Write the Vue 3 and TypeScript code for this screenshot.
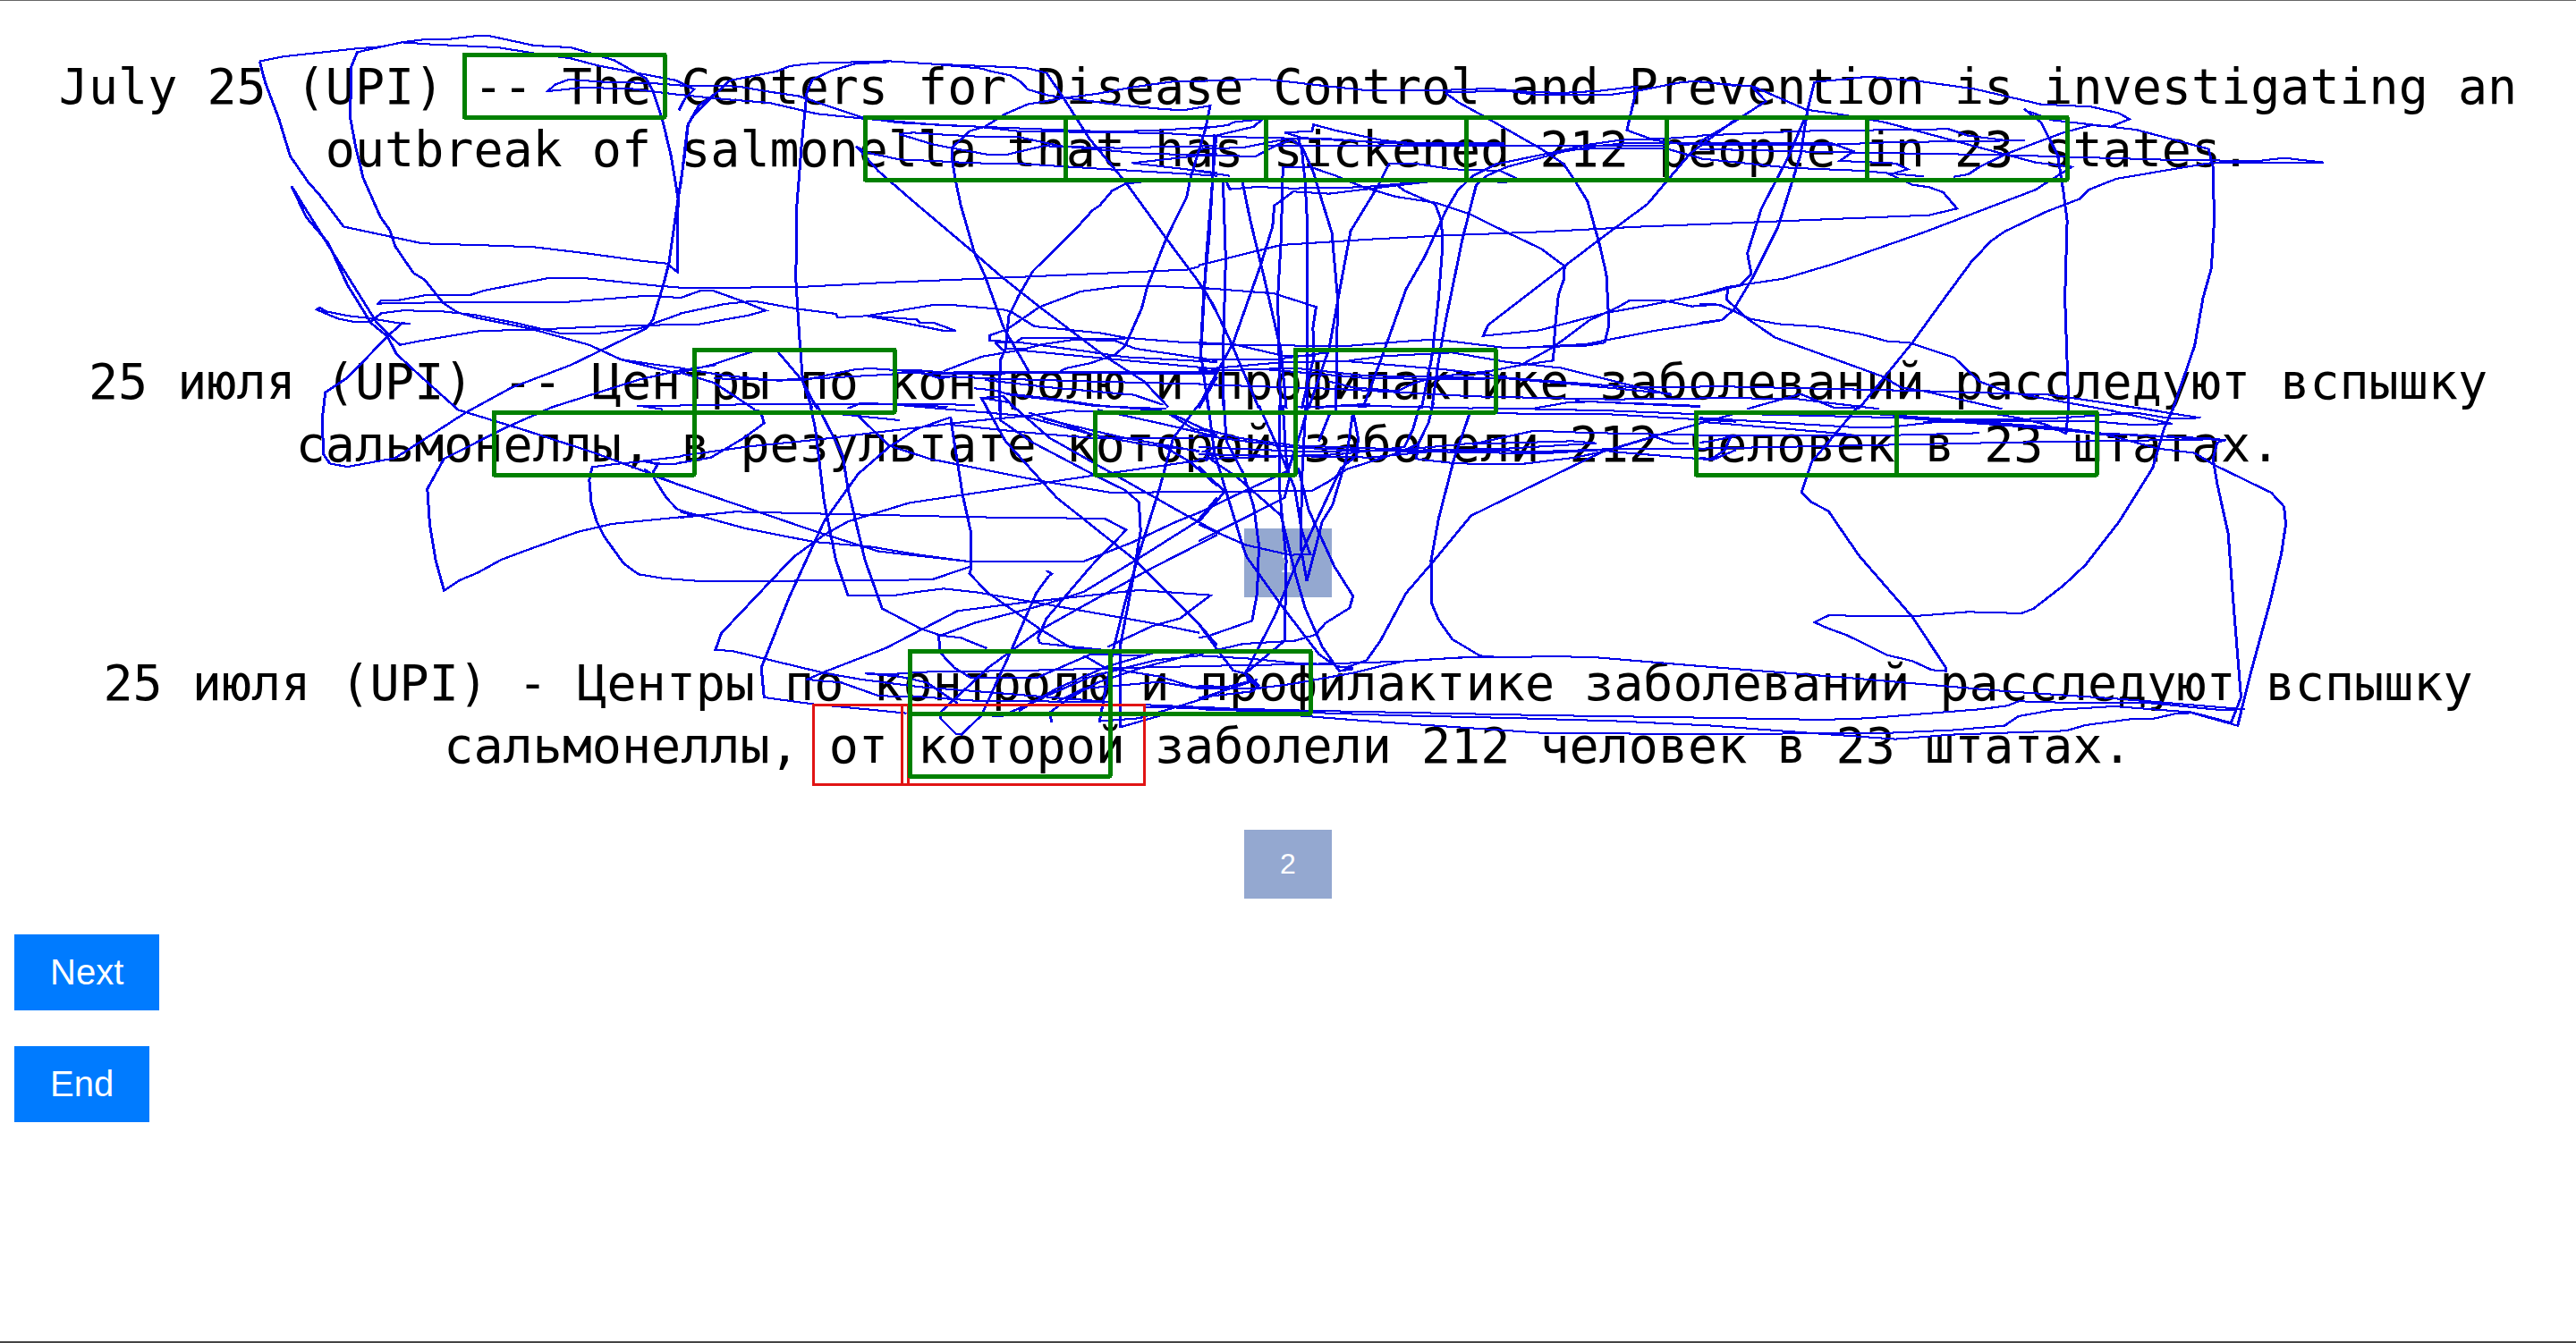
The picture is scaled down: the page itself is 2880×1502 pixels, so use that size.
<script setup lang="ts">
interface Tile {
  x: number
  y: number
  sx: number
  sy: number
  lines: string[]
}

interface Box {
  x: number
  y: number
  w: number
  h: number
}

const source: string =
  'July 25 (UPI) -- The Centers for Disease Control and Prevention is investigating an outbreak of salmonella that has sickened 212 people in 23 states.'
const optionOne: string =
  '25 июля (UPI) -- Центры по контролю и профилактике заболеваний расследуют вспышку сальмонеллы, в результате которой заболели 212 человек в 23 штатах.'
const optionTwo: string =
  '25 июля (UPI) - Центры по контролю и профилактике заболеваний расследуют вспышку сальмонеллы, от которой заболели 212 человек в 23 штатах.'

// Fixation cells: each one is 224 x 70
const cell = (x: number, y: number): Box => ({ x, y, w: 224, h: 70 })
const fixations: Box[] = [
  cell(519, 61),
  ...[0, 1, 2, 3, 4, 5].map((i) => cell(967 + i * 224, 131)),
  cell(776, 391),
  cell(1448, 391),
  cell(552, 461),
  cell(1224, 461),
  cell(1896, 461),
  cell(2120, 461),
  cell(1017, 728),
  cell(1241, 728),
  cell(1017, 798),
]

const differences: Box[] = [
  { x: 909, y: 788, w: 106, h: 89 },
  { x: 1008, y: 788, w: 271, h: 89 },
]

// Gaze trace, recorded per screen tile in the tile's own units
const tiles: Tile[] = [
  {
    x: 0, y: 0, sx: 0.5102, sy: 0.4082,
    lines: [
      '568,168 620,155 780,133 835,128 880,116 935,107 985,107 1045,98 1070,98 1170,125 1250,130 1345,165 1415,215 1430,250 1450,325 1470,430 1485,545 1483,745 1460,722 1400,714 1290,695 1170,677 1060,672 925,667 752,621 700,535 675,500 635,428 610,325 580,225 568,168',
      '880,116 950,122 1090,130 1190,150 1250,160 1310,180 1480,220 1520,245 1500,270 1487,302',
      '835,128 782,143 768,185 767,325 778,400 795,488 833,595 853,630 865,675 905,748 930,767 970,830 1000,855 1040,870 1160,900 1290,945 1360,985 1440,1010 1490,1025',
      '1490,260 1380,243 1275,240 1200,250 1215,232 1245,218 1340,226 1420,227 1490,234',
      '1568,255 1530,290 1507,340 1500,420 1485,545 1465,720 1455,770 1430,875 1415,900 1250,1000 1120,1062 1020,1130 865,1255 760,1279 722,1270 708,1245 705,1150 712,1075 760,1035 848,922 880,885 897,887',
      '638,510 670,595 718,665 760,780 812,885 848,922 868,970 920,1030 1003,1123 1140,1175 1300,1240 1430,1300 1490,1330',
      '638,510 660,555 740,715 825,885 875,945 915,935 1050,907 1190,902 1310,895 1490,889',
      '812,880 835,858 880,851 960,852 1040,863 1130,885 1225,913 1305,914 1400,900 1490,860',
      '812,883 780,883 740,873 715,860 693,848 700,843 712,853 760,865 810,872 880,887 897,887',
      '825,835 835,822 875,822 935,808 1030,808 1060,796 1200,762 1280,762 1430,782 1490,788',
      '825,832 940,829 1235,828 1420,810 1490,816',
      '1360,985 1440,1000 1490,1008',
      '1568,1000 1480,1017 1400,1040 1210,1115 1110,1170 975,1255',
      '1450,1121 1395,1111 1490,1111',
    ],
  },
  {
    x: 760, y: 0, sx: 0.3827, sy: 0.3333,
    lines: [
      '0,632 22,420 40,385 75,345 145,270 280,240 320,222 390,212 610,205 740,215 890,222 1010,228 1070,245 1115,320 1195,465 1300,610 1420,800 1530,970 1568,1050',
      '0,287 120,287 180,292 260,308 345,322 430,355 535,395 640,412 780,420 890,426 1130,437 1260,442 1400,437 1568,425',
      '0,318 130,333 260,345 400,382 535,398 640,408 760,420 870,425 1000,442 1240,443 1430,448 1568,458',
      '610,208 510,214 440,238 385,268 370,310 355,480 340,700 338,940 347,1110 358,1280 385,1370',
      '740,215 880,230 910,240 965,253 995,275 1015,300 1075,320 1125,328 1215,315 1325,292 1450,272 1516,273',
      '1125,328 1280,352 1410,366 1470,370 1548,355 1535,430 1490,600 1480,660 1420,800 1365,960 1348,1035 1300,1160 1270,1190 1200,1218 1130,1235 1110,1245',
      '1125,328 1015,350 950,382 890,425 845,440 795,495 795,540 805,610 820,690 860,850 890,925 945,1100 1020,1250',
      '1568,490 1420,492 1280,497 1130,492 1060,490 950,520 895,518 795,497 740,485 640,450 680,445 770,452 900,460 990,460 1110,490 1350,515 1568,522',
      '515,492 545,512 640,535 740,540 850,547 1000,550 1250,568 1430,580 1568,590',
      '515,492 580,575 680,675 850,840 940,930 1050,1030 1240,1195 1355,1280 1425,1365',
      '1350,610 1300,617 1262,640 1225,690 1205,705 1150,775 1030,910 990,990 960,1060 950,1170 935,1210 932,1379',
      '0,967 350,963 600,948 900,934 1480,905 1516,895',
      '0,1000 60,975 95,975 180,1010 250,1042 200,1058 50,1089 0,1090',
      '0,1052 130,1020 215,1010 340,1036 455,1053 460,1065 545,1060 735,1024 790,1023 940,1038 965,1045 1035,1095 1230,1118 1300,1133 1480,1150 1568,1151',
      '545,1060 690,1072 700,1082 740,1083 805,1110 770,1110 640,1080 545,1060',
      '1568,970 1390,960 1290,960 1170,978 1050,1030 955,1105 905,1125 905,1142 1000,1150 1180,1178 1300,1198 1568,1215',
      '920,1150 940,1172 1010,1170 1060,1155 1150,1140 1270,1143 1330,1170 1568,1210',
      '920,1150 980,1150 1000,1133 1300,1138',
      '770,1245 880,1197 990,1175 1170,1195 1568,1238',
      '215,1178 90,1225 0,1250',
      '0,1235 130,1260 285,1277 360,1275 510,1240 555,1236 700,1248 760,1270 800,1262',
      '0,1250 100,1285 215,1372',
      '100,1270 280,1275 400,1270 630,1255',
      '270,1178 285,1180 355,1275 400,1372',
      '630,1243 700,1243 770,1250 1000,1247 1568,1247',
      '630,1250 770,1255 1000,1252 1200,1252 1568,1255',
      '760,1262 900,1270 1200,1280 1568,1290',
      '860,1303 920,1310 965,1325 1110,1345 1210,1362 1420,1372',
      '945,1330 880,1335 900,1379',
      '945,1330 980,1375',
      '0,1360 350,1355 860,1358',
      '490,1370 530,1352 620,1357 780,1365',
      '890,1275 1080,1300 1325,1325 1410,1358',
      '1560,450 1555,610 1545,800 1530,970 1520,1180 1543,1370',
      '1568,580 1320,547 1400,537 1568,515',
      '1515,1370 1568,1265',
    ],
  },
  {
    x: 1340, y: 0, sx: 0.3827, sy: 0.3333,
    lines: [
      '0,272 80,270 160,265 230,270 380,290 480,302 700,303 850,297 960,308 1060,312 1170,305 1280,290 1250,437 1330,470 1420,485 1568,480',
      '720,310 900,305 980,317 1200,318 1280,305 1400,278 1450,272 1568,288',
      '720,312 760,345 840,395 1000,500 1065,550 1100,610 1135,675 1170,820 1190,920 1198,1090 1185,1150 1130,1160 900,1168 700,1140 640,1142 420,1162 0,1155',
      '0,432 85,420 100,410 185,400 160,425 50,455 40,600 22,850 5,1200',
      '0,455 200,463 370,465 540,480 690,480 890,480',
      '200,490 1360,490',
      '250,445 330,440 335,418 400,438 540,472 680,486 890,486',
      '250,445 300,462 400,470 640,484 890,490',
      '0,500 130,495 260,465 290,465 300,500 310,610 315,720 315,1379',
      '0,520 165,525 230,485 270,470 300,490 335,580 350,640 388,780 405,1000 400,1379',
      '0,575 90,590',
      '70,600 78,870 70,1200 72,1370',
      '80,610 90,635 170,627 270,632 480,628 670,608',
      '125,600 150,740 190,930 240,1180 255,1370',
      '238,1379 230,1000 240,800 245,560 330,562 400,590 480,628 575,660 690,680 790,718 900,780 1000,835 1068,893 1065,940 1050,990 1040,1100 1035,1210 940,1225',
      '670,610 580,622 600,640 690,685 708,740 712,820 700,1000 680,1200 650,1370',
      '840,608 890,612 940,605 880,573 740,568 640,550 555,550 520,630 443,775 410,980 380,1170 320,1370',
      '580,622 380,650 275,643 220,690 215,760 180,890 100,1150 0,1360',
      '0,890 240,822 500,803 720,790 1000,778 1300,760 1463,753',
      '0,965 220,985 342,1030 333,1100 335,1200 300,1370',
      '1463,457 1360,465 1230,470 1140,485 1020,515 870,550 800,590 755,640 720,710 660,860 605,970 540,1180 480,1365',
      '1463,480 1250,480 1160,490 1060,510 900,560 840,590 810,620 770,800 720,1080 700,1210 680,1370',
      '1568,400 1435,515 1365,610 1310,685 1180,795 1060,900 845,1090 830,1127 995,1108 1190,1050 1310,1025 1500,982 1568,960',
      '940,1225 1035,1165 1140,1075 1225,1030 1260,1007 1350,1007 1440,1028 1515,1022 1568,1045',
      '1525,1075 1330,1110 1130,1155 920,1168',
      '1100,500 1360,497 1430,520 1463,530',
      '0,950 40,1020 90,1140 175,1370',
      '0,1150 100,1155 250,1195 340,1195',
      '0,1205 230,1205 380,1182',
      '0,1240 250,1215 430,1212 720,1240 900,1265',
      '440,1210 540,1195 740,1183 900,1215 1060,1235 1250,1290 1380,1325',
      '0,1245 280,1235 480,1260 900,1270 1100,1290 1380,1322',
      '200,1240 500,1270 800,1272 900,1268 1250,1298 1463,1298',
      '380,1280 450,1300 580,1312 630,1285 690,1265 850,1245 940,1225',
      '0,1290 400,1305 800,1330 1200,1340 1463,1338',
      '980,1370 1080,1350 1150,1348 1463,1362',
      '290,1365 500,1362 800,1370',
      '350,1368 430,1360 490,1366',
    ],
  },
  {
    x: 1900, y: 0, sx: 0.625, sy: 0.3333,
    lines: [
      '0,275 95,290 150,335 190,368 245,382 330,410 480,485 600,545 665,560 600,637 400,780 240,885 150,935 50,963 0,990',
      '95,295 118,340 60,410 0,475',
      '455,593 480,585 500,560 550,515 650,445 700,420 735,425 768,400 750,380 700,358 610,350 490,298 390,272 300,257 265,265 205,275 195,350 190,400 180,520 140,760 95,930 60,1040 40,1073 0,1083',
      '190,385 160,520 110,700 85,850 92,920 70,960 50,965 48,1005 85,1070 135,1133 325,1262 360,1300 400,1312 540,1372',
      '580,365 610,410 640,520 650,640 657,740 653,1000 660,1379',
      '590,375 630,403 780,435 870,480 910,500 918,560 920,740 915,900 900,1000 885,1160 845,1379',
      '0,455 180,440 445,433 480,455 550,472 580,472',
      '0,485 240,485 350,477 560,472',
      '0,480 235,480 275,508 250,540 350,548 372,568 340,585 380,620 410,628 435,645 460,700 410,722 0,753',
      '0,500 220,510 540,520 850,537 1000,540 1045,530 1115,545 920,545 870,560 745,600 695,637 680,667 620,710 545,777 520,810 485,880 430,1020 380,1150 285,1370',
      '0,532 160,563 290,573 400,592',
      '0,1020 35,1022 90,1070 140,1087 215,1097 290,1122 335,1145 375,1150 455,1200 500,1280 550,1315 740,1379',
      '0,1295 400,1312 630,1325 820,1379',
      '0,1335 170,1338 320,1372',
      '85,1372 180,1322 240,1368 285,1370',
    ],
  },
  {
    x: 760, y: 380, sx: 0.3827, sy: 0.3333,
    lines: [
      '380,220 395,300 420,540 455,740 490,858 630,857 700,845 770,835 870,848 1080,890 1360,947 1516,983',
      '400,220 445,320 475,390 490,500 540,740 590,902 700,968 760,992 820,1000 895,1035',
      '215,235 235,240 245,280 185,330 90,395 0,413',
      '0,390 200,358 400,335 690,295 860,272 1020,255 1130,238 1210,240',
      '500,240 520,255 610,355 730,400 1060,475 1260,513 1516,510',
      '660,1253 385,1222 245,1200 237,1100 320,860 420,610 520,450 610,360 690,300 790,260 800,340 825,520 850,650 850,765 845,785 900,850 1050,970 1140,1033 1230,1040',
      '0,488 400,645 580,710 850,745',
      '0,573 190,633 390,678 560,695 700,722 850,745 1180,743 1320,680 1450,610 1516,580',
      '0,597 160,577 350,582 850,595 1240,600 1303,638 1200,760 1070,935 1045,1000 1050,1018 1230,1040',
      '0,805 70,811 735,805 850,760',
      '1516,405 1210,455 670,547 490,610 420,655 330,730 120,985 103,1040 155,1045 420,1118 530,1140 700,1165 870,1180 1250,1215',
      '1250,1030 1380,960 1460,935 1550,857 1340,840 1000,882 810,910 600,1035 420,1115 370,1140 470,1150 580,1195 700,1198 870,1212 1250,1215',
      '540,1120 620,1122 700,1115 1000,1110 1516,1095',
      '540,1120 640,1130 720,1150 810,1220',
      '880,195 950,340 1100,530 1330,740 1520,960 1568,1025',
      '935,200 935,270 1030,345 1220,460 1300,505 1340,545 1345,640 1320,820 1285,1030 1285,1300 1400,1262',
      '880,195 960,210 1080,330 1280,460 1480,590 1568,645',
      '1568,530 1510,610 1330,740 1180,845 1060,890 860,950 755,995 760,1050 800,1100 850,1135 1040,1135 1200,1055 1360,1060',
      '1568,655 1380,765 1190,885 1050,975 900,1100 760,1250 760,1270 805,1322 822,1325 880,1260 960,1060 1040,850 1075,795 1085,785 1070,775',
      '1540,180 1440,330 1400,500 1340,720 1300,880 1265,1040 1240,1190 1225,1280 1340,1270 1470,1225 1568,1190',
      '780,1255 940,1263 1040,1210 1200,1130 1390,1075 1516,1060',
      '1085,1285 1080,1250 1140,1200 1220,1150 1350,1100 1516,1050',
      '990,1245 1100,1170 1250,1095 1400,1045',
      '1180,1060 1240,1100 1400,1130 1500,1165 1568,1165',
      '1100,1215 1180,1170 1400,1148 1516,1170',
      '1360,1225 1568,1235',
      '1360,1232 1568,1238',
      '430,245 640,270',
      '600,215 800,235 1000,255 1210,320',
      '790,285 1000,310 1210,330 1500,330',
      '1020,245 1100,275 1210,320 1350,350 1516,372',
      '1060,265 1300,330 1400,350 1516,375',
      '950,180 1100,200 1220,220 1420,240 1568,320',
      '1220,235 1400,280 1568,325',
      '1430,250 1500,300 1568,310',
      '1400,350 1490,410 1568,490',
      '1535,405 1568,385 1530,375 1568,360',
    ],
  },
  {
    x: 1340, y: 380, sx: 0.3827, sy: 0.3333,
    lines: [
      '25,200 45,380 130,700 140,730 240,890 350,1055 400,1095 430,1100 490,1075 530,1010 605,850 680,750 795,590 1180,375 1340,320 1560,250',
      '72,200 80,340 130,450 160,560 175,690 170,850 155,943 30,993 0,1000',
      '235,220 235,500 255,740 250,1010 135,1120 175,1160 155,1180 0,1200',
      '175,220 245,400 280,500 300,640 325,720 265,722 135,688 0,620',
      '245,220 255,400 265,460 250,530 0,675',
      '0,580 110,520 260,440 300,300 320,220',
      '312,220 300,480 298,700 315,810 340,700 360,610 390,555 430,400 450,240',
      '290,430 320,570 395,760 450,860 440,900 370,950 340,990 280,1010 130,1020 0,1055',
      '385,240 350,340',
      '450,240 465,330 460,390 415,430 330,640 270,790 220,930 135,1120 100,1110 60,1050 0,955',
      '0,510 330,507 380,475 430,435 580,380 640,350',
      '0,425 75,510 0,610',
      '20,390 110,460 240,590 280,780 310,900 360,1030 410,1112 450,1105',
      '645,220 625,300 600,360 400,385 0,400',
      '685,210 670,280 640,350 635,400 750,415 935,418 1100,395 1200,370 1330,325 1385,347 1430,347',
      '790,250 745,400 700,600 678,740 680,885 700,940 740,1005 820,1060 860,1065',
      '0,295 120,330 280,355 600,368 820,345 980,305 1130,312 1463,320',
      '0,320 280,362 500,372 800,378 1000,382 1240,365 1463,367',
      '0,360 300,375 700,370 1000,375 1240,365',
      '0,385 500,395 720,370 900,365 1160,347 1090,340 800,350',
      '1200,375 1500,403 1568,370',
      '350,225 500,215',
      '0,245 650,245 1200,250 1568,275',
      '1100,205 1463,225',
      '800,228 1200,238 1463,250',
      '0,1060 150,1070 280,1085 400,1090',
      '0,1095 340,1088 580,1080 780,1065 1060,1063 1150,1065 1463,1095',
      '0,1170 170,1170 270,1155 450,1118 520,1098 600,1078 740,1068 860,1062',
      '0,1235 340,1245 1000,1260 1463,1268',
      '0,1240 300,1250 560,1260 940,1270 1230,1280 1463,1293',
      '280,1260 500,1280 1010,1320 1463,1323',
      '400,1098 450,1100 420,1110 440,1095',
      '135,1120 150,1150 140,1140 175,1165',
      '0,1160 80,1165 170,1140 0,1205',
    ],
  },
  {
    x: 1900, y: 380, sx: 0.625, sy: 0.3333,
    lines: [
      '660,220 655,315 620,285 570,262 500,240',
      '845,235 830,300 810,430 750,610 690,755 650,825 597,902 575,918 480,913 380,928 230,925 205,948 225,965 265,993 335,1058 380,1078 415,1108 440,1112 440,1100 410,1015 380,930 285,725 250,630 230,575 200,545 182,512 200,410 285,220',
      '735,215 895,262 845,265 780,245 740,250 620,265 460,268 340,293 270,293 0,262',
      '735,238 845,282 780,286 700,273 400,275',
      '320,250 640,295 720,315 830,325 940,337 925,345 918,400 925,480 945,650 955,900 968,1200 950,1285 880,1250 740,1230 630,1243 570,1263 545,1295 450,1310 330,1320 0,1323',
      '100,250 360,262 640,300 730,320 820,365 885,380 920,420 1022,513 1045,560 1048,620 1040,720 1020,880 985,1120 962,1295 880,1252 850,1255 810,1272 770,1273 690,1293 655,1312 450,1325 350,1340 200,1320 0,1292',
      '0,1268 220,1275 300,1270 500,1240 550,1228 570,1213 660,1218 800,1218 930,1242 975,1240 750,1205 550,1180 270,1135 0,1095',
      '360,255 500,280 700,312 930,333',
      '0,320 350,320 500,313',
      '0,365 270,355 600,343 900,335',
      '0,395 20,400 45,370 55,325 70,320 20,340 0,345',
      '0,275 150,298 270,318',
    ],
  },
  {
    x: 400, y: 440, sx: 0.3333, sy: 0.3333,
    lines: [
      '290,215 232,320 240,440 260,560 288,662 340,627 400,602 480,558 560,528 735,465 850,438 1130,410 1260,398',
      '960,228 1005,238 990,262 995,290 1035,352 1070,388 1130,410 1080,397',
      '1080,232 1060,238 1000,235 955,227 1080,212',
      '960,228 870,236 785,247 775,290 782,370 800,430 825,480 890,570 940,607 1020,620 1080,625',
      '960,255 1000,280 1080,308',
    ],
  },
]
</script>

<template>
  <main class="page">
    <p class="sentence source">{{ source }}</p>

    <section class="option">
      <p class="sentence">{{ optionOne }}</p>
      <button type="button" class="choice">1</button>
    </section>

    <section class="option">
      <p class="sentence">{{ optionTwo }}</p>
      <button type="button" class="choice">2</button>
    </section>

    <nav class="actions">
      <button type="button" class="action">Next</button>
      <button type="button" class="action">End</button>
    </nav>

    <svg class="gaze" viewBox="0 0 2880 1502" aria-hidden="true">
      <g id="gaze-trace">
        <g
          v-for="(tile, t) in tiles"
          :key="t"
          class="trace"
          :transform="`translate(${tile.x} ${tile.y}) scale(${tile.sx} ${tile.sy})`"
        >
          <polyline v-for="(line, l) in tile.lines" :key="l" :points="line" />
        </g>
      </g>
      <!-- Second pass widens the steep strokes, like a square brush -->
      <use href="#gaze-trace" x="1" />
      <rect
        v-for="(box, i) in differences"
        :key="`d${i}`"
        class="difference"
        :x="box.x"
        :y="box.y"
        :width="box.w"
        :height="box.h"
      />
      <rect
        v-for="(box, i) in fixations"
        :key="`f${i}`"
        class="fixation"
        :x="box.x"
        :y="box.y"
        :width="box.w"
        :height="box.h"
      />
    </svg>
  </main>
</template>

<style>
body {
  margin: 0;
  background: #fff;
}
</style>

<style scoped>
.page {
  position: relative;
  box-sizing: border-box;
  min-height: 100vh;
  padding: 61px 16px 40px;
  border-top: 1px solid #666;
  border-bottom: 2px solid #444;
  font-family: "Liberation Sans", Arial, sans-serif;
}

.sentence {
  margin: 0;
  font-family: "DejaVu Sans Mono", monospace;
  font-size: 55px;
  line-height: 70px;
  text-align: center;
  color: #000;
}

.source {
  margin-bottom: 190px;
}

.option {
  display: flex;
  flex-direction: column;
  align-items: center;
  gap: 59px;
}

.option + .option {
  margin-top: 61px;
}

.choice,
.action {
  border: 0;
  border-radius: 0;
  font-family: inherit;
  color: #fff;
}

.choice {
  padding: 20px 40px;
  background: #94a8d0;
  font-size: 32px;
  line-height: 37px;
}

.actions {
  display: flex;
  flex-direction: column;
  align-items: flex-start;
  gap: 40px;
  margin-top: 40px;
}

.action {
  padding: 20px 40px;
  background: #007bff;
  font-size: 40px;
  line-height: 45px;
}

.gaze {
  position: absolute;
  top: -1px;
  left: 0;
  width: 100%;
  pointer-events: none;
}

.trace polyline {
  fill: none;
  stroke: #0000ea;
  stroke-width: 2px;
  vector-effect: non-scaling-stroke;
  shape-rendering: crispEdges;
}

.difference {
  fill: none;
  stroke: #e11414;
  stroke-width: 3px;
  shape-rendering: crispEdges;
}

.fixation {
  fill: none;
  stroke: #008000;
  stroke-width: 5px;
  stroke-linejoin: round;
  shape-rendering: crispEdges;
}
</style>
